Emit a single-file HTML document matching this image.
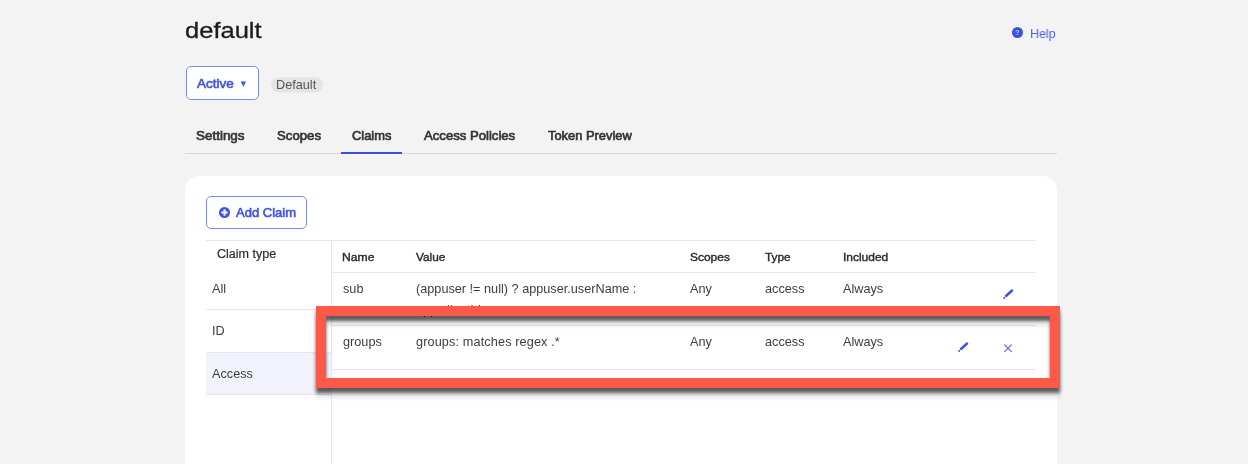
<!DOCTYPE html>
<html><head><meta charset="utf-8">
<style>
html,body{margin:0;padding:0;}
body{width:1248px;height:464px;background:#f3f3f3;position:relative;overflow:hidden;font-family:"Liberation Sans",sans-serif;}
.a{position:absolute;}
.t{position:absolute;white-space:nowrap;will-change:transform;}
.line{position:absolute;background:#e6e6e6;}
</style></head><body>
<div class="t" style="left:185px;top:20px;font-size:22px;line-height:22px;color:#1b1b1f;transform:scaleX(1.16);transform-origin:0 0;-webkit-text-stroke:0.3px #1b1b1f;">default</div>
<svg class="a" style="left:1012px;top:26.7px;will-change:transform;" width="11" height="11" viewBox="0 0 11 11">
  <circle cx="5.5" cy="5.5" r="5.5" fill="#3d51e0"/>
  <text x="5.5" y="8.2" font-family="Liberation Sans" font-weight="700" font-size="7" fill="#c9cff7" text-anchor="middle">?</text>
</svg>
<div class="t" style="left:1030px;top:27px;font-size:13px;line-height:13px;color:#5063e6;transform:scaleX(0.96);transform-origin:0 0;">Help</div>
<div class="a" style="left:186px;top:66px;width:73px;height:34px;box-sizing:border-box;border:1px solid #7b8bee;border-radius:5px;background:#fff;"></div>
<div class="t" style="left:196.8px;top:78px;font-size:12.5px;line-height:12.5px;color:#4155e3;-webkit-text-stroke:0.6px #4155e3;transform:scaleX(1.08);transform-origin:0 0;">Active</div>
<svg class="a" style="left:240px;top:81px;will-change:transform;" width="7" height="7" viewBox="0 0 7 7"><path d="M0.7 0.4 L6.0 0.4 L3.35 5.8 Z" fill="#3f53e2"/></svg>
<div class="a" style="left:271px;top:77px;width:52px;height:15px;border-radius:8px;background:#e4e4e4;transform:translateY(0.4px);"></div>
<div class="t" style="left:276.3px;top:79px;font-size:12.7px;line-height:12.7px;color:#555;">Default</div>
<div class="t" style="left:195.8px;top:130px;font-size:12.5px;line-height:12.5px;color:#333;-webkit-text-stroke:0.65px #333;transform:scaleX(1.075);transform-origin:0 0;">Settings</div>
<div class="t" style="left:276.5px;top:130px;font-size:12.5px;line-height:12.5px;color:#333;-webkit-text-stroke:0.65px #333;transform:scaleX(1.055);transform-origin:0 0;">Scopes</div>
<div class="t" style="left:352.2px;top:130px;font-size:12.5px;line-height:12.5px;color:#333;-webkit-text-stroke:0.65px #333;transform:scaleX(1.03);transform-origin:0 0;">Claims</div>
<div class="t" style="left:423.5px;top:130px;font-size:12.5px;line-height:12.5px;color:#333;-webkit-text-stroke:0.65px #333;transform:scaleX(1.05);transform-origin:0 0;">Access Policies</div>
<div class="t" style="left:547.8px;top:130px;font-size:12.5px;line-height:12.5px;color:#333;-webkit-text-stroke:0.65px #333;transform:scaleX(1.03);transform-origin:0 0;">Token Preview</div>
<div class="a" style="left:185px;top:153px;width:872px;height:1px;background:#d9d9d9;"></div>
<div class="a" style="left:341px;top:152px;width:61px;height:2px;background:#3a4fe0;"></div>
<div class="a" style="left:185px;top:175.6px;width:872px;height:420px;border-radius:14px;background:#fff;"></div>
<div class="a" style="left:206px;top:196px;width:101px;height:33px;box-sizing:border-box;border:1px solid #7b8bee;border-radius:5px;background:#fff;"></div>
<svg class="a" style="left:218.6px;top:207.2px;will-change:transform;" width="11" height="11" viewBox="0 0 11 11">
  <circle cx="5.5" cy="5.5" r="5.5" fill="#3f53e2"/>
  <rect x="2.4" y="4.5" width="6.2" height="2" fill="#fff"/>
  <rect x="4.5" y="2.4" width="2" height="6.2" fill="#fff"/>
</svg>
<div class="t" style="left:235.5px;top:207px;font-size:12.5px;line-height:12.5px;color:#4155e3;-webkit-text-stroke:0.6px #4155e3;transform:scaleX(1.04);transform-origin:0 0;">Add Claim</div>
<div class="line" style="left:206px;top:240px;width:830px;height:1px;"></div>
<div class="line" style="left:331px;top:240px;width:1px;height:230px;"></div>
<div class="line" style="left:206px;top:309px;width:125px;height:1px;"></div>
<div class="a" style="left:206px;top:352px;width:125px;height:42px;background:#f2f2fd;"></div>
<div class="line" style="left:206px;top:352px;width:125px;height:1px;"></div>
<div class="line" style="left:206px;top:394px;width:125px;height:1px;"></div>
<div class="line" style="left:332px;top:272px;width:704px;height:1px;"></div>
<div class="line" style="left:332px;top:325px;width:704px;height:1px;"></div>
<div class="line" style="left:332px;top:369px;width:704px;height:1px;"></div>
<div class="t" style="left:216.7px;top:248px;font-size:12px;line-height:12px;color:#2c2c2c;-webkit-text-stroke:0.2px #2c2c2c;transform:scaleX(1.045);transform-origin:0 0;">Claim type</div>
<div class="t" style="left:212px;top:283px;font-size:12.7px;line-height:12.7px;color:#3d3d3d;">All</div>
<div class="t" style="left:212px;top:325px;font-size:12.7px;line-height:12.7px;color:#3d3d3d;">ID</div>
<div class="t" style="left:212px;top:368px;font-size:12.7px;line-height:12.7px;color:#3d3d3d;">Access</div>
<div class="t" style="left:342.3px;top:252px;font-size:11.5px;line-height:11.5px;color:#2a2a2a;-webkit-text-stroke:0.4px #2a2a2a;transform:scaleX(1.06);transform-origin:0 0;">Name</div>
<div class="t" style="left:416.2px;top:252px;font-size:11.5px;line-height:11.5px;color:#2a2a2a;-webkit-text-stroke:0.4px #2a2a2a;transform:scaleX(1.03);transform-origin:0 0;">Value</div>
<div class="t" style="left:690px;top:252px;font-size:11.5px;line-height:11.5px;color:#2a2a2a;-webkit-text-stroke:0.4px #2a2a2a;transform:scaleX(1.04);transform-origin:0 0;">Scopes</div>
<div class="t" style="left:765.2px;top:252px;font-size:11.5px;line-height:11.5px;color:#2a2a2a;-webkit-text-stroke:0.4px #2a2a2a;transform:scaleX(1.03);transform-origin:0 0;">Type</div>
<div class="t" style="left:843px;top:252px;font-size:11.5px;line-height:11.5px;color:#2a2a2a;-webkit-text-stroke:0.4px #2a2a2a;transform:scaleX(1.04);transform-origin:0 0;">Included</div>
<div class="t" style="left:342.5px;top:283px;font-size:12.7px;line-height:12.7px;color:#3d3d3d;">sub</div>
<div class="t" style="left:416px;top:283px;font-size:12.7px;line-height:12.7px;color:#3d3d3d;">(appuser != null) ? appuser.userName :</div>
<div class="t" style="left:690px;top:283px;font-size:12.7px;line-height:12.7px;color:#3d3d3d;">Any</div>
<div class="t" style="left:765px;top:283px;font-size:12.7px;line-height:12.7px;color:#3d3d3d;">access</div>
<div class="t" style="left:843px;top:283px;font-size:12.7px;line-height:12.7px;color:#3d3d3d;">Always</div>
<div class="t" style="left:416px;top:304px;font-size:12.7px;line-height:12.7px;color:#3d3d3d;">app.clientId</div>
<div class="t" style="left:342.5px;top:336px;font-size:12.7px;line-height:12.7px;color:#3d3d3d;">groups</div>
<div class="t" style="left:690px;top:336px;font-size:12.7px;line-height:12.7px;color:#3d3d3d;">Any</div>
<div class="t" style="left:765px;top:336px;font-size:12.7px;line-height:12.7px;color:#3d3d3d;">access</div>
<div class="t" style="left:843px;top:336px;font-size:12.7px;line-height:12.7px;color:#3d3d3d;">Always</div>
<div class="t" style="left:416.3px;top:336px;font-size:12.7px;line-height:12.7px;color:#3d3d3d;letter-spacing:0.12px;">groups: matches regex .*</div>
<svg class="a" style="left:1000px;top:285.7px;" width="16" height="16" viewBox="0 0 16 16">
  <line x1="6" y1="10" x2="12" y2="4.5" stroke="#3f53e2" stroke-width="2.5" stroke-linecap="round"/>
  <circle cx="4.2" cy="12" r="1" fill="#3f53e2"/>
</svg>
<svg class="a" style="left:954.5px;top:339.2px;" width="16" height="16" viewBox="0 0 16 16">
  <line x1="6" y1="10" x2="12" y2="4.5" stroke="#3f53e2" stroke-width="2.5" stroke-linecap="round"/>
  <circle cx="4.2" cy="12" r="1" fill="#3f53e2"/>
</svg>
<svg class="a" style="left:1000px;top:339.8px;" width="16" height="16" viewBox="0 0 16 16">
  <path d="M4.3 4.6 L11.7 11.8 M11.7 4.6 L4.3 11.8" stroke="#5567e6" stroke-width="1.15" fill="none"/>
</svg>
<div class="a" style="left:316px;top:306px;width:744px;height:82px;box-sizing:border-box;border:10px solid #fd5948;box-shadow:0 5px 3.5px rgba(0,0,0,0.6), 0 10px 4px rgba(0,0,0,0.09), inset 0 5px 3.5px rgba(0,0,0,0.6), inset 0 10px 4px rgba(0,0,0,0.09);"></div>
</body></html>
